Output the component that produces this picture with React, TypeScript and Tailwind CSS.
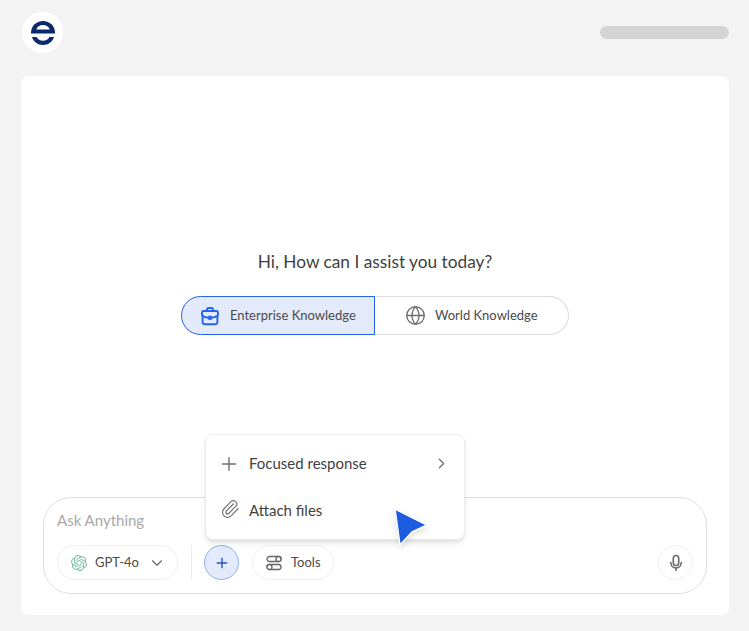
import { ChevronDown, ChevronRight, Globe, Paperclip, Plus } from "lucide-react";
import { SiOpenai } from "react-icons/si";

function Logo() {
  return (
    <div className="flex h-[41px] w-[41px] items-center justify-center rounded-full bg-white">
      <svg width="26" height="26" viewBox="0 0 26 26" fill="none">
        <path d="M1 13.500V12.500C1 6 6.400 1 13 1s12 5 12 11.500v1H1Z" fill="#0b2a6b" />
        <path d="M6.200 9.500C7 7 9.700 5 13 5s6 2 6.800 4.500H6.200Z" fill="#fff" />
        <path d="M2 17h4.600c1 2.200 3.400 3.800 6.400 3.800s5.400-1.600 6.400-3.800H24c-1.300 4.600-5.700 8-11 8S3.300 21.600 2 17Z" fill="#0b2a6b" />
      </svg>
    </div>
  );
}

function BriefcaseIcon() {
  return (
    <svg width="20" height="20" viewBox="0 0 20 20" fill="none" stroke="#2563eb" strokeWidth="1.900" strokeLinecap="round" strokeLinejoin="round">
      <path d="M7 5V3.500C7 2.700 7.700 2 8.500 2h3c.8 0 1.500.7 1.500 1.500V5" />
      <path d="M3.500 5h13c.8 0 1.500.7 1.500 1.500V9c0 .5-.2.800-.6 1v6c0 1.200-1 2.200-2.200 2.200H4.800c-1.200 0-2.200-1-2.200-2.200v-6c-.4-.2-.6-.5-.6-1V6.500C2 5.700 2.700 5 3.500 5Z" />
      <path d="M2.500 9.800c1.800 1 3.800 1.700 5.800 2M17.500 9.800c-1.800 1-3.800 1.700-5.800 2" />
      <circle cx="10" cy="11.800" r="1.400" />
    </svg>
  );
}

function ToolsIcon() {
  return (
    <svg width="16" height="16" viewBox="0 0 16 16" fill="none" stroke="#666" strokeWidth="1.300">
      <rect x="1" y="1.500" width="14" height="5" rx="2.500" />
      <rect x="1" y="9.500" width="14" height="5" rx="2.500" />
      <circle cx="12.500" cy="4" r="2.500" fill="#fff" />
      <circle cx="3.500" cy="12" r="2.500" fill="#fff" />
    </svg>
  );
}

function MicIcon() {
  return (
    <svg width="18" height="18" viewBox="0 0 18 18" fill="none" stroke="#6e6e6e" strokeWidth="1.700" strokeLinecap="round">
      <rect x="6.300" y="1.500" width="5.400" height="10" rx="2.700" />
      <path d="M3.800 8.500c0 3.200 2.300 5.500 5.200 5.500s5.200-2.300 5.200-5.500" />
      <path d="M9 14v2.200" />
    </svg>
  );
}

function Cursor() {
  return (
    <svg width="40" height="44" viewBox="0 0 40 44" className="absolute left-[371px] top-[430px] drop-shadow-md">
      <path d="M3 3 35 19 20 26 8 39 3 3Z" fill="#1d5be0" stroke="#fff" strokeWidth="1.500" strokeLinejoin="round" />
    </svg>
  );
}

export default function App() {
  return (
    <div className="flex h-[631px] w-[749px] flex-col bg-[#f3f3f3] pb-[16px] pl-[21px] pr-[20px] pt-[12px] font-['Lato',sans-serif]">
      <header className="flex h-[41px] items-center justify-between pl-[1px]">
        <Logo />
        <div className="mb-[1px] h-[13px] w-[129px] rounded-full bg-[#d4d4d4]" />
      </header>

      <main className="relative mt-[23px] flex flex-1 flex-col rounded-[8px] bg-white">
        <div className="flex flex-1 flex-col items-center pt-[174px]">
          <h1 className="text-[17.300px] leading-[24px] text-[#3f3f3f]">Hi, How can I assist you today?</h1>
          <div className="mt-[22px] flex h-[39px] w-[388px] text-[13px] text-[#4a4a4a]">
            <div className="flex w-[194px] items-center gap-[10px] rounded-l-full border border-[#2563eb] bg-[#e3eafb] pl-[18px]">
              <BriefcaseIcon />
              <span className="pt-[1px]">Enterprise Knowledge</span>
            </div>
            <div className="flex flex-1 items-center gap-[9px] rounded-r-full border border-l-0 border-[#dcdcdc] pl-[30px]">
              <Globe size={21} strokeWidth={1.500} className="text-[#6e6e6e]" />
              <span className="pt-[1px]">World Knowledge</span>
            </div>
          </div>
        </div>

        <div className="mx-[22px] mb-[21px] h-[97px] rounded-[28px] border border-[#dedede] bg-white px-[13px] pt-[12px]">
          <div className="text-[15px] leading-[20px] text-[#a8a8a8]">Ask Anything</div>
          <div className="mt-[15px] flex items-center">
            <button className="flex h-[35px] w-[121px] items-center rounded-full border border-[#efefef] pl-[13px] text-[13px] text-[#4a4a4a]">
              <SiOpenai size={16} className="text-[#7dbfa6]" />
              <span className="ml-[8px]">GPT-4o</span>
              <ChevronDown size={18} strokeWidth={1.500} className="ml-[9px] text-[#666]" />
            </button>
            <div className="ml-[13px] h-[35px] w-px bg-[#ececec]" />
            <button className="ml-[12px] flex h-[35px] w-[35px] items-center justify-center rounded-full border border-[#8fb0f3] bg-[#e3eafb]">
              <Plus size={16} strokeWidth={2} className="text-[#1d4fc4]" />
            </button>
            <button className="ml-[13px] flex h-[35px] w-[82px] items-center rounded-full border border-[#efefef] pl-[13px] text-[13px] text-[#4a4a4a]">
              <ToolsIcon />
              <span className="ml-[9px]">Tools</span>
            </button>
            <button className="ml-auto flex h-[35px] w-[35px] items-center justify-center rounded-full border border-[#efefef]">
              <MicIcon />
            </button>
          </div>
        </div>

        <div className="absolute left-[184px] top-[358px] w-[260px] rounded-[8px] border border-[#ececec] bg-white shadow-md">
          <div className="flex h-[57px] items-center pl-[12px] pr-[14px] text-[15px] text-[#3f3f3f]">
            <Plus size={22} strokeWidth={1.500} className="text-[#6e6e6e]" />
            <span className="ml-[9px] flex-1">Focused response</span>
            <ChevronRight size={17} strokeWidth={1.700} className="text-[#6e6e6e]" />
          </div>
          <div className="flex h-[47px] items-start pl-[14px] pt-[7px] text-[15px] text-[#3f3f3f]">
            <Paperclip size={20} strokeWidth={1.500} className="text-[#777]" />
            <span className="ml-[9px]">Attach files</span>
          </div>
        </div>

        <Cursor />
      </main>
    </div>
  );
}
